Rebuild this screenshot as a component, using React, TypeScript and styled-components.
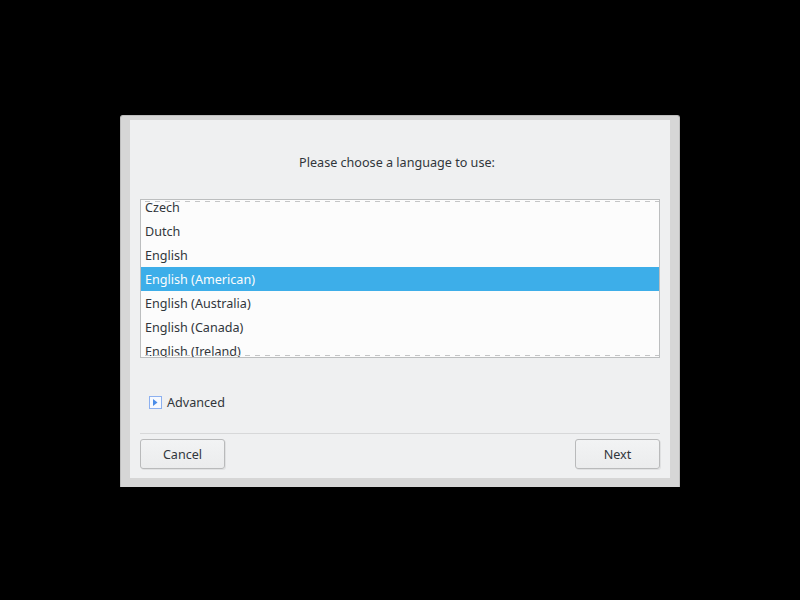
import React from "react";
import styled, { createGlobalStyle } from "styled-components";

const GlobalStyle = createGlobalStyle`
    html, body {
        margin: 0;
        padding: 0;
        background: #000000;
        width: 800px;
        height: 600px;
        overflow: hidden;
    }
`;

const Screen = styled.div`
    display: flex;
    justify-content: center;
    padding-top: 115px;
    font-family: "Noto Sans", "DejaVu Sans", sans-serif;
    font-size: 12.6px;
    color: #31363b;
`;

const Window = styled.div`
    width: 560px;
    height: 372px;
    box-sizing: border-box;
    padding: 4px 9px 8px 9px;
    background: #d6d6d6;
    border: 1px solid #bdbdbd;
    border-bottom: none;
    border-radius: 3px 3px 0 0;
`;

const Content = styled.div`
    height: 358px;
    box-sizing: border-box;
    background: #eff0f1;
    padding: 0 10px;
    display: flex;
    flex-direction: column;
`;

const Title = styled.div`
    margin-top: 33px;
    height: 20px;
    line-height: 20px;
    text-align: center;
    padding-right: 6px;
`;

const ListBox = styled.div`
    position: relative;
    margin-top: 26px;
    height: 159px;
    box-sizing: border-box;
    border: 1px solid #bcbebf;
    background: #fcfcfc;
    overflow: hidden;
`;

const ListInner = styled.div<{ $offset: number }>`
    margin-top: ${(p) => -p.$offset}px;
`;

const Row = styled.div<{ $selected?: boolean }>`
    height: 24px;
    box-sizing: border-box;
    padding: 1px 0 0 4px;
    line-height: 23px;
    background: ${(p) => (p.$selected ? "#3daee9" : "transparent")};
    color: ${(p) => (p.$selected ? "#fcfcfc" : "#31363b")};
    white-space: nowrap;
`;

const Dashes = styled.div<{ $edge: "top" | "bottom" }>`
    position: absolute;
    left: 4px;
    right: 0;
    ${(p) => p.$edge}: 1px;
    height: 1px;
    background: repeating-linear-gradient(
        to right,
        #c4c5c6 0 5px,
        transparent 5px 10px
    );
`;

const Advanced = styled.div`
    margin-top: 34px;
    height: 20px;
    display: flex;
    align-items: center;
    gap: 5px;
    padding-left: 9px;
`;

const Separator = styled.div`
    margin-top: 21px;
    height: 1px;
    background: #d7d8d9;
`;

const ButtonRow = styled.div`
    margin-top: 5px;
    display: flex;
    justify-content: space-between;
`;

const Button = styled.button`
    width: 85px;
    height: 30px;
    box-sizing: border-box;
    border: 1px solid #b9babb;
    border-radius: 3px;
    background: linear-gradient(#f2f3f4, #ebeced);
    box-shadow: 1px 1px 0 rgba(0, 0, 0, 0.06);
    font-family: inherit;
    font-size: 12.6px;
    color: #31363b;
    padding: 0;
`;

const languages = [
    "Czech",
    "Dutch",
    "English",
    "English (American)",
    "English (Australia)",
    "English (Canada)",
    "English (Ireland)",
];

const ExpandIcon = () => (
    <svg width="13" height="13" viewBox="0 0 13 13">
        <rect x="0.5" y="0.5" width="12" height="12" fill="#f6f9fe" stroke="#8cb0f0" />
        <path d="M4 3 L8.5 6.5 L4 10 Z" fill="#4a8ce8" />
    </svg>
);

export default function App() {
    return (
        <>
            <GlobalStyle />
            <Screen>
                <Window>
                    <Content>
                        <Title>Please choose a language to use:</Title>
                        <ListBox>
                            <ListInner $offset={5}>
                                {languages.map((l) => (
                                    <Row key={l} $selected={l === "English (American)"}>
                                        {l}
                                    </Row>
                                ))}
                            </ListInner>
                            <Dashes $edge="top" />
                            <Dashes $edge="bottom" />
                        </ListBox>
                        <Advanced>
                            <ExpandIcon />
                            <span>Advanced</span>
                        </Advanced>
                        <Separator />
                        <ButtonRow>
                            <Button>Cancel</Button>
                            <Button>Next</Button>
                        </ButtonRow>
                    </Content>
                </Window>
            </Screen>
        </>
    );
}
